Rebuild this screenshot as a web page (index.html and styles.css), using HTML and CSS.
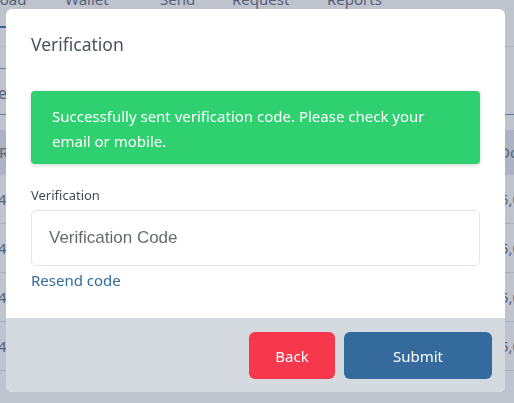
FILE: index.html
```html
<!DOCTYPE html>
<html>
<head>
<meta charset="utf-8">
<link rel="stylesheet" href="styles.css">
</head>
<body>
<div class="page">
  <nav class="tabs">
    <span class="tab active">Download</span>
    <span class="tab t-wallet">Wallet</span>
    <span class="tab t-send">Send</span>
    <span class="tab t-request">Request</span>
    <span class="tab t-reports">Reports</span>
  </nav>
  <div class="subbar"></div>
  <div class="toolbar"><span class="tool"></span></div>
  <div class="panel">
    <div class="panel-title">Balance</div>
  </div>
  <div class="table">
    <div class="trow thead"><span class="c1">Ref</span><span class="c2">Document</span></div>
    <div class="trow"><span class="c1">4</span><span class="c2">5,000</span></div>
    <div class="trow"><span class="c1">4</span><span class="c2">5,000</span></div>
    <div class="trow"><span class="c1">4</span><span class="c2">5,000</span></div>
    <div class="trow"><span class="c1">4</span><span class="c2">5,000</span></div>
  </div>
</div>

<div class="overlay">
  <div class="modal">
    <div class="modal-header">
      <h2 class="modal-title">Verification</h2>
    </div>
    <div class="modal-body">
      <div class="alert">Successfully sent verification code. Please check your email or mobile.</div>
      <label class="field-label" for="code">Verification</label>
      <input class="field-input" id="code" type="text" placeholder="Verification Code">
      <a class="resend" href="#">Resend code</a>
    </div>
    <div class="modal-footer">
      <button class="btn btn-back">Back</button>
      <button class="btn btn-submit">Submit</button>
    </div>
  </div>
</div>
</body>
</html>
```

FILE: styles.css
```css
* { box-sizing: border-box; }
html, body { margin: 0; padding: 0; }
body {
  width: 514px;
  height: 403px;
  overflow: hidden;
  background: #bec3cd;
  font-family: "Noto Sans", "Open Sans", sans-serif;
  color: #4d5466;
}

/* background page (dimmed) */
.page {
  margin-left: -46px;
  width: 620px;
  color: #56627a;
}
.tabs {
  display: flex;
  height: 42px;
  margin-top: -14px;
  font-size: 15px;
}
.tab {
  height: 42px;
  line-height: 26px;
  white-space: nowrap;
}
.tab.active { width: 111px; padding-left: 1px; border-bottom: 2px solid #3e6496; }
.t-wallet { width: 95px; }
.t-send { width: 72px; }
.t-request { width: 95px; }
.subbar {
  height: 19px;
  border-bottom: 1px solid #aeb5c1;
}
.toolbar { height: 22px; }
.tool {
  display: block;
  width: 120px;
  height: 22px;
  border-bottom: 1px solid #5f7aa1;
}
.panel {
  height: 46px;
  border-bottom: 1px solid #5f7aa1;
  font-size: 16px;
}
.panel-title {
  width: 53px;
  padding-top: 13px;
  line-height: 22px;
  text-align: right;
  white-space: nowrap;
  direction: rtl;
}
.table { margin-top: 15px; }
.trow {
  display: flex;
  height: 49px;
  line-height: 48px;
  border-bottom: 1px solid #aab1be;
  font-size: 15px;
  padding-left: 44px;
  white-space: nowrap;
}
.trow .c1 { width: 502px; flex-shrink: 0; }
.trow .c2 { width: 60px; flex-shrink: 0; }
.trow.thead {
  height: 45px;
  line-height: 45px;
  background: #adb3bf;
  border-bottom: none;
  padding-left: 45px;
}
.trow.thead .c1 { width: 500px; }

/* modal */
.overlay {
  position: fixed;
  inset: 0;
}
.modal {
  position: absolute;
  left: 6px;
  top: 9px;
  width: 499px;
  background: #ffffff;
  border-radius: 6px;
  overflow: hidden;
}
.modal-header {
  padding: 24px 25px 0;
}
.modal-title {
  margin: 0;
  font-size: 17.5px;
  font-weight: 400;
  line-height: 22px;
  color: #4a5161;
}
.modal-body {
  padding: 36px 25px 28px;
  display: flex;
  flex-direction: column;
}
.alert {
  background: #2ed070;
  color: #ffffff;
  border-radius: 4px;
  padding: 13px 21px 10px;
  font-size: 15px;
  line-height: 25px;
  box-shadow: 0 1px 4px rgba(0, 0, 0, 0.18);
}
.field-label {
  margin-top: 22px;
  font-size: 13px;
  line-height: 18px;
  color: #454a55;
}
.field-input {
  margin-top: 6px;
  height: 56px;
  border: 1px solid #e1e4ea;
  border-radius: 5px;
  padding: 0 17px;
  font-family: "Liberation Sans", Arial, sans-serif;
  font-size: 17px;
  color: #555;
  outline: none;
}
.field-input::placeholder { color: #666a70; }
.resend {
  margin-top: 4px;
  font-size: 15px;
  line-height: 20px;
  color: #356a9c;
  text-decoration: none;
}
.modal-footer {
  background: #d5d9e0;
  display: flex;
  justify-content: flex-end;
  gap: 9px;
  padding: 14px 13px 13px;
}
.btn {
  height: 47px;
  border: none;
  border-radius: 6px;
  color: #ffffff;
  font-family: "Noto Sans", "Open Sans", sans-serif;
  font-size: 15px;
  cursor: pointer;
}
.btn-back { width: 86px; background: #f7374b; }
.btn-submit { width: 148px; background: #356a9c; }
```
